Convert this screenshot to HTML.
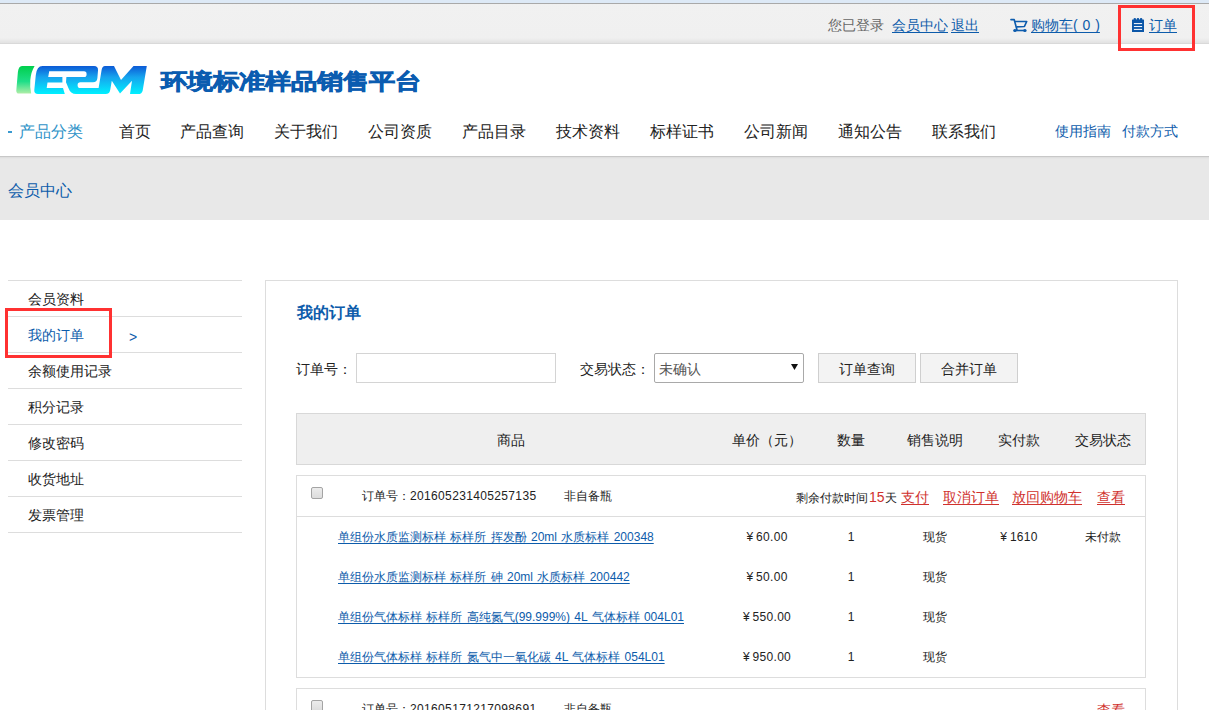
<!DOCTYPE html>
<html><head><meta charset="utf-8">
<style>
*{margin:0;padding:0;box-sizing:border-box}
html,body{width:1209px;height:710px;overflow:hidden;background:#fff}
body{font-family:"Liberation Sans",sans-serif;color:#222;position:relative}
.a{position:absolute;white-space:nowrap}
a{color:#0d5cab;text-decoration:underline;text-underline-offset:2px;text-decoration-skip-ink:none}
#topbar{position:absolute;left:0;top:0;width:1209px;height:44px;background:linear-gradient(#f1f1f1 0,#f0f0f0 38px,#e2e2e2 43px);border-bottom:1px solid #d9d9d9}
#topstrip{position:absolute;left:0;top:0;width:1209px;height:3px;background:#dde9f6}
#topline{position:absolute;left:0;top:3px;width:1209px;height:1px;background:#a9a9a9}
.redbox{position:absolute;border:3px solid #ff3131}
.t14{font-size:14px;line-height:16px}
.t12{font-size:12px;line-height:14px}
.t16{font-size:16px;line-height:18px}
.nav{top:123px;font-size:16px;line-height:18px;color:#222}
.side{position:absolute;left:8px;width:234px;height:1px;background:#dddddd}
.st{left:28.4px;font-size:14px;line-height:16px;color:#222}
.hd{top:432px;font-size:14px;line-height:16px;color:#222;text-align:center}
.rc{font-size:12px;line-height:14px;color:#222;text-align:center}
.lnk{font-size:12px;line-height:14px;left:338px;word-spacing:1px}
.red{color:#d0312d}
</style></head><body>
<div id="topbar"></div>
<div id="topstrip"></div>
<div id="topline"></div>

<!-- top right -->
<div class="a t14" style="left:828px;top:17px;color:#666">您已登录</div>
<a class="a t14" style="left:892px;top:17px">会员中心</a>
<a class="a t14" style="left:951px;top:17px">退出</a>
<svg class="a" style="left:1006px;top:14px" width="26" height="22" viewBox="0 0 26 22">
  <path d="M5,5.6 H8.2 L10.9,15.6" fill="none" stroke="#0d5cad" stroke-width="1.7" stroke-linecap="round" stroke-linejoin="round"/>
  <path d="M8.9,7.5 H20.7 L18.4,12.5 L10.6,12.9" fill="none" stroke="#0d5cad" stroke-width="1.7" stroke-linejoin="round"/>
  <path d="M8,16.5 H19.8" fill="none" stroke="#0d5cad" stroke-width="1.6"/>
  <ellipse cx="8.9" cy="16.6" rx="1.7" ry="1.5" fill="#0d5cad"/><ellipse cx="18.9" cy="16.6" rx="1.7" ry="1.5" fill="#0d5cad"/>
</svg>
<a class="a t14" style="left:1031px;top:17px;word-spacing:1px">购物车( 0 )</a>
<svg class="a" style="left:1128px;top:14px" width="22" height="22" viewBox="0 0 22 22">
  <rect x="4" y="5.6" width="12" height="12.4" fill="#0b56a8"/>
  <circle cx="6.8" cy="5.4" r="1.3" fill="#0b56a8"/><circle cx="9.95" cy="5.4" r="1.3" fill="#0b56a8"/><circle cx="13.1" cy="5.4" r="1.3" fill="#0b56a8"/>
  <rect x="5.9" y="9.1" width="8.2" height="1" fill="#fff"/><rect x="5.9" y="12.05" width="8.2" height="1" fill="#fff"/><rect x="5.9" y="14.9" width="8.2" height="1" fill="#fff"/>
</svg>
<a class="a t14" style="left:1149px;top:17px">订单</a>
<div class="redbox" style="left:1118px;top:5px;width:77px;height:46px"></div>

<!-- logo -->
<svg class="a" style="left:0;top:60px" width="160" height="40" viewBox="0 60 160 40">
  <defs>
    <linearGradient id="gb" x1="0" y1="66" x2="0" y2="94" gradientUnits="userSpaceOnUse"><stop offset="0" stop-color="#0c5ad6"/><stop offset="0.4" stop-color="#16a4ee"/><stop offset="1" stop-color="#00f0ff"/></linearGradient>
    <linearGradient id="gg" x1="0" y1="66" x2="0" y2="94" gradientUnits="userSpaceOnUse"><stop offset="0" stop-color="#00cf4c"/><stop offset="0.55" stop-color="#1ede88"/><stop offset="1" stop-color="#b4eea8"/></linearGradient>
  </defs>
  <path d="M22,66 H34.6 Q31,72 30.3,80 Q29.7,88 31.2,93.6 H18.8 Q16.2,93.6 16.3,90.5 L17.9,72 Q18.6,66 22,66 Z" fill="url(#gg)"/>
  <path d="M42.5,66 H94 Q98.4,66 98,70.5 L97.4,78 Q97,82.3 93,82.3 H80.4 Q77.6,82.3 77.6,85.15 Q77.6,88 80.4,88 H98.6 L101.6,70 Q102.3,66 105,66 H114 L121,80 L133.5,66 H146.8 L142.7,90.4 Q142,94 138,94 H130 L132,80.8 L120,93.4 L111.8,80.8 L110.3,89.4 Q109.6,94 105.7,94 H76 Q70.5,94 68.4,88 L66,82.3 L66.4,77 H84 Q86.6,77 86.6,74.15 Q86.6,71.3 84,71.3 H49.2 L48.2,77 H62.4 V82.5 H47.5 L46.7,88.1 H63 L64.8,94 H38 Q34,94 34.3,90 L35.8,75 Q36.8,66 42.5,66 Z" fill="url(#gb)"/>
</svg>
<div class="a" style="left:161px;top:64px;font-size:26px;line-height:30px;font-weight:900;color:#0b5cb0;-webkit-text-stroke:0.9px #0b5cb0;transform:scaleY(0.84);transform-origin:0 100%">环境标准样品销售平台</div>

<!-- nav -->
<div class="a" style="left:8px;top:131px;width:4px;height:2px;background:#3a9ad0"></div>
<div class="a nav" style="left:19px;color:#2f93c8">产品分类</div>
<div class="a nav" style="left:119px">首页</div>
<div class="a nav" style="left:180px">产品查询</div>
<div class="a nav" style="left:274px">关于我们</div>
<div class="a nav" style="left:368px">公司资质</div>
<div class="a nav" style="left:462px">产品目录</div>
<div class="a nav" style="left:556px">技术资料</div>
<div class="a nav" style="left:650px">标样证书</div>
<div class="a nav" style="left:744px">公司新闻</div>
<div class="a nav" style="left:838px">通知公告</div>
<div class="a nav" style="left:932px">联系我们</div>
<div class="a t14" style="left:1055px;top:123px;color:#0d5cab">使用指南</div>
<div class="a t14" style="left:1122px;top:123px;color:#0d5cab">付款方式</div>

<!-- gray band -->
<div class="a" style="left:0;top:156px;width:1209px;height:64px;background:linear-gradient(#dcdcdc 0,#e8e8e8 2px);border-top:1px solid #c8c8c8"></div>
<div class="a t16" style="left:8px;top:182px;color:#0d5cab">会员中心</div>

<!-- sidebar -->
<div class="side" style="top:280px"></div>
<div class="side" style="top:316px"></div>
<div class="side" style="top:352px"></div>
<div class="side" style="top:388px"></div>
<div class="side" style="top:424px"></div>
<div class="side" style="top:460px"></div>
<div class="side" style="top:496px"></div>
<div class="side" style="top:532px"></div>
<div class="a st" style="top:291px">会员资料</div>
<div class="a st" style="top:327px;color:#0d5cab">我的订单</div>
<div class="a st" style="left:129px;top:329px;color:#0d5cab">&gt;</div>
<div class="a st" style="top:363px">余额使用记录</div>
<div class="a st" style="top:399px">积分记录</div>
<div class="a st" style="top:435px">修改密码</div>
<div class="a st" style="top:471px">收货地址</div>
<div class="a st" style="top:507px">发票管理</div>
<div class="redbox" style="left:5px;top:308px;width:107px;height:50px"></div>

<!-- panel -->
<div class="a" style="left:265px;top:280px;width:913px;height:460px;border:1px solid #dddddd"></div>
<div class="a" style="left:297px;top:304px;font-size:16px;line-height:18px;font-weight:bold;color:#0d5cab">我的订单</div>
<div class="a t14" style="left:296px;top:361px">订单号：</div>
<div class="a" style="left:356px;top:353px;width:200px;height:30px;border:1px solid #d4d4d4;background:#fff"></div>
<div class="a t14" style="left:580px;top:361px">交易状态：</div>
<div class="a" style="left:654px;top:353px;width:150px;height:30px;border:1px solid #a9a9a9;border-radius:2px;background:#fff"></div>
<div class="a t14" style="left:659px;top:361px;color:#555">未确认</div>
<svg class="a" style="left:791px;top:364px" width="7" height="6"><path d="M0 0 H7 L3.5 6Z" fill="#111"/></svg>
<div class="a t14" style="left:818px;top:353px;width:98px;height:30px;border:1px solid #cfcfcf;background:#f3f3f3;text-align:center;line-height:30px">订单查询</div>
<div class="a t14" style="left:920px;top:353px;width:98px;height:30px;border:1px solid #cfcfcf;background:#f3f3f3;text-align:center;line-height:30px">合并订单</div>

<!-- table header -->
<div class="a" style="left:296px;top:413px;width:850px;height:52px;background:#efefef;border:1px solid #d8d8d8"></div>
<div class="a hd" style="left:297px;width:428px">商品</div>
<div class="a hd" style="left:725px;width:84px">单价（元）</div>
<div class="a hd" style="left:809px;width:84px">数量</div>
<div class="a hd" style="left:893px;width:84px">销售说明</div>
<div class="a hd" style="left:977px;width:84px">实付款</div>
<div class="a hd" style="left:1061px;width:84px">交易状态</div>

<!-- order 1 -->
<div class="a" style="left:296px;top:475px;width:850px;height:203px;border:1px solid #dddddd"></div>
<div class="a" style="left:297px;top:516px;width:848px;height:1px;background:#dddddd"></div>
<div class="a" style="left:311px;top:487px;width:12px;height:12px;border:1px solid #a4a4a4;border-radius:2px;background:linear-gradient(#ececec,#dcdcdc)"></div>
<div class="a t12" style="left:362px;top:489px">订单号：<span style="letter-spacing:.35px">201605231405257135</span></div>
<div class="a t12" style="left:564px;top:489px">非自备瓶</div>
<div class="a t12" style="left:796px;top:490px">剩余付款时间<span class="red" style="font-size:14px;margin:0 0 0 1px">15</span>天</div>
<a class="a t14 red" style="left:901px;top:489px">支付</a>
<a class="a t14 red" style="left:943px;top:489px">取消订单</a>
<a class="a t14 red" style="left:1012px;top:489px">放回购物车</a>
<a class="a t14 red" style="left:1097px;top:489px">查看</a>

<a class="a lnk" style="top:530px">单组份水质监测标样 标样所 挥发酚 20ml 水质标样 200348</a>
<a class="a lnk" style="top:570px">单组份水质监测标样 标样所 砷 20ml 水质标样 200442</a>
<a class="a lnk" style="top:610px">单组份气体标样 标样所 高纯氮气(99.999%) 4L 气体标样 004L01</a>
<a class="a lnk" style="top:650px">单组份气体标样 标样所 氮气中一氧化碳 4L 气体标样 054L01</a>

<div class="a rc" style="left:725px;width:84px;top:530px"><span style="margin-right:3px">¥</span><span style="letter-spacing:.3px">60.00</span></div>
<div class="a rc" style="left:809px;width:84px;top:530px">1</div>
<div class="a rc" style="left:893px;width:84px;top:530px">现货</div>
<div class="a rc" style="left:977px;width:84px;top:530px"><span style="margin-right:3px">¥</span><span style="letter-spacing:.3px">1610</span></div>
<div class="a rc" style="left:1061px;width:84px;top:530px">未付款</div>
<div class="a rc" style="left:725px;width:84px;top:570px"><span style="margin-right:3px">¥</span><span style="letter-spacing:.3px">50.00</span></div>
<div class="a rc" style="left:809px;width:84px;top:570px">1</div>
<div class="a rc" style="left:893px;width:84px;top:570px">现货</div>
<div class="a rc" style="left:725px;width:84px;top:610px"><span style="margin-right:3px">¥</span><span style="letter-spacing:.3px">550.00</span></div>
<div class="a rc" style="left:809px;width:84px;top:610px">1</div>
<div class="a rc" style="left:893px;width:84px;top:610px">现货</div>
<div class="a rc" style="left:725px;width:84px;top:650px"><span style="margin-right:3px">¥</span><span style="letter-spacing:.3px">950.00</span></div>
<div class="a rc" style="left:809px;width:84px;top:650px">1</div>
<div class="a rc" style="left:893px;width:84px;top:650px">现货</div>

<!-- order 2 -->
<div class="a" style="left:296px;top:688px;width:850px;height:60px;border:1px solid #dddddd"></div>
<div class="a" style="left:311px;top:700px;width:12px;height:12px;border:1px solid #a4a4a4;border-radius:2px;background:linear-gradient(#ececec,#dcdcdc)"></div>
<div class="a t12" style="left:362px;top:702px">订单号：<span style="letter-spacing:.35px">201605171217098691</span></div>
<div class="a t12" style="left:564px;top:702px">非自备瓶</div>
<a class="a t14 red" style="left:1097px;top:702px">查看</a>
</body></html>
